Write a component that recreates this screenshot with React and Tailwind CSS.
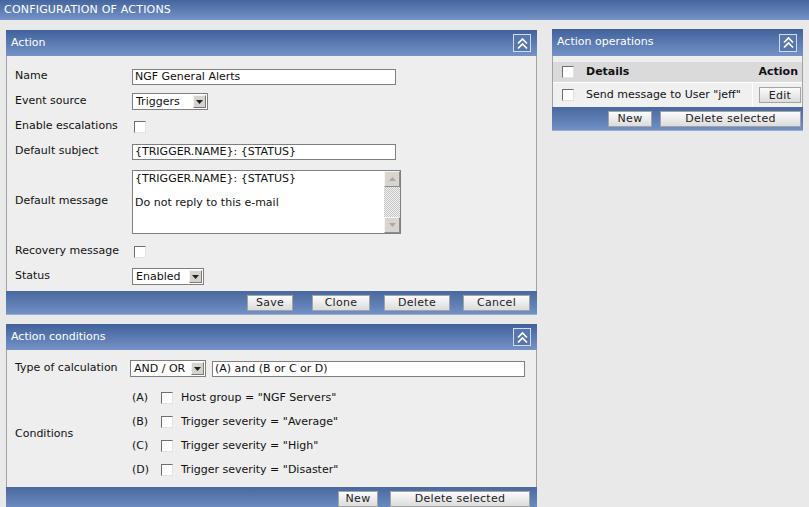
import React from "react";

const CollapseIcon = () => (
  <span className="w-[18px] h-[18px] border border-[#d0dbef] bg-[#5877b0] flex items-center justify-center">
    <svg width="13" height="13" viewBox="0 0 13 13" fill="none" stroke="white" strokeWidth="1.7">
      <path d="M2 6.5 L6.5 2 L11 6.5" />
      <path d="M2 11.5 L6.5 7 L11 11.5" />
    </svg>
  </span>
);

const PanelHeader = ({ title, h = "h-[26px]" }) => (
  <div className={`${h} flex items-center justify-between pl-[5px] pr-[6px] bg-gradient-to-b from-[#41619c] to-[#7593c6] text-white`}>
    <span>{title}</span>
    <CollapseIcon />
  </div>
);

const PanelFooter = ({ children, pr = "pr-[7px]" }) => (
  <div className={`h-[24px] flex items-center justify-end ${pr} bg-gradient-to-b from-[#48689f] to-[#7190c4] border-b border-[#9aaed0]`}>
    {children}
  </div>
);

const Button = ({ label, className = "" }) => (
  <button
    className={`h-[16px] border border-[#a3a3a3] bg-gradient-to-b from-[#fbfbfb] to-[#dcdcdc] text-[11px] leading-none text-[#222] tracking-[0.3px] ${className}`}
  >
    {label}
  </button>
);

const Checkbox = () => (
  <span className="inline-block w-[12px] h-[12px] bg-white border border-t-[#6e6e6e] border-l-[#6e6e6e] border-r-[#e2e2e2] border-b-[#e2e2e2]" />
);

const Select = ({ value, width }) => (
  <div
    className={`h-[17px] ${width} flex items-center justify-between bg-white border border-[#7f7f7f] pl-[3px] pr-[1px]`}
  >
    <span className="leading-none">{value}</span>
    <span className="w-[13px] h-[13px] bg-[#d6d3cc] border border-t-[#f4f4f4] border-l-[#f4f4f4] border-r-[#7a7a7a] border-b-[#7a7a7a] flex items-center justify-center">
      <svg width="7" height="4" viewBox="0 0 7 4">
        <path d="M0 0 H7 L3.5 4 Z" fill="#222" />
      </svg>
    </span>
  </div>
);

const TextInput = ({ value, width }) => (
  <div className={`h-[16px] ${width} flex items-center bg-white border border-[#7f7f7f] px-[2px]`}>
    <span className="leading-none">{value}</span>
  </div>
);

const Row = ({ label, children, h = "h-[25px]" }) => (
  <div className={`flex items-center ${h}`}>
    <div className="w-[117px] shrink-0">{label}</div>
    <div className="flex items-center">{children}</div>
  </div>
);

const ScrollArrow = ({ up }) => (
  <div className="w-[16px] h-[16px] bg-[#d8d5ce] border border-t-[#f6f6f6] border-l-[#f6f6f6] border-r-[#8c8c8c] border-b-[#8c8c8c] flex items-center justify-center">
    <svg width="7" height="4" viewBox="0 0 7 4">
      <path d={up ? "M0 4 H7 L3.5 0 Z" : "M0 0 H7 L3.5 4 Z"} fill="#a8a8a8" />
    </svg>
  </div>
);

const conditions = [
  ["(A)", 'Host group = "NGF Servers"'],
  ["(B)", 'Trigger severity = "Average"'],
  ["(C)", 'Trigger severity = "High"'],
  ["(D)", 'Trigger severity = "Disaster"'],
];

export default function App() {
  return (
    <div className="w-[809px] h-[507px] overflow-hidden bg-[#e9e9e9] font-['DejaVu_Sans',sans-serif] text-[11px] text-[#111]">
      {/* Top bar */}
      <div className="h-[20px] flex items-center pl-[4px] bg-gradient-to-b from-[#45659f] to-[#7593c7] text-white uppercase text-[11px] tracking-[0.2px]">
        Configuration of actions
      </div>

      <div className="flex mt-[10px] ml-[6px] gap-[15px]">
        {/* Left column */}
        <div className="w-[531px] flex flex-col">
          {/* Action panel */}
          <div>
            <PanelHeader title="Action" />
            <div className="bg-[#eeeeee] border-x border-[#a2a2a2] pt-[8px] pb-[2px] pl-[8px]">
              <Row label="Name">
                <TextInput value="NGF General Alerts" width="w-[264px]" />
              </Row>
              <Row label="Event source">
                <Select value="Triggers" width="w-[76px]" />
              </Row>
              <Row label="Enable escalations">
                <span className="ml-[2px] flex">
                  <Checkbox />
                </span>
              </Row>
              <Row label="Default subject">
                <TextInput value="{TRIGGER.NAME}: {STATUS}" width="w-[264px]" />
              </Row>
              <Row label="Default message" h="h-[75px]">
                <div className="w-[269px] h-[64px] flex bg-white border border-[#7f7f7f]">
                  <div className="flex-1 px-[2px] pt-[2px] leading-[12px]">
                    <div>{"{TRIGGER.NAME}: {STATUS}"}</div>
                    <div className="h-[12px]" />
                    <div>Do not reply to this e-mail</div>
                  </div>
                  <div className="w-[16px] flex flex-col bg-[repeating-conic-gradient(#c4c4c4_0_25%,#f2f2f2_0_50%)] bg-[length:2px_2px]">
                    <ScrollArrow up />
                    <div className="flex-1" />
                    <ScrollArrow />
                  </div>
                </div>
              </Row>
              <Row label="Recovery message">
                <span className="ml-[2px] flex">
                  <Checkbox />
                </span>
              </Row>
              <Row label="Status">
                <Select value="Enabled" width="w-[72px]" />
              </Row>
            </div>
            <PanelFooter>
              <Button label="Save" className="w-[46px]" />
              <Button label="Clone" className="w-[58px] ml-[19px]" />
              <Button label="Delete" className="w-[66px] ml-[14px]" />
              <Button label="Cancel" className="w-[67px] ml-[13px]" />
            </PanelFooter>
          </div>

          {/* Action conditions panel */}
          <div className="mt-[9px]">
            <PanelHeader title="Action conditions" />
            <div className="bg-[#eeeeee] border-x border-[#a2a2a2] pt-[6px] pb-[5px] pl-[8px]">
              <div className="flex items-center h-[25px]">
                <div className="w-[115px] shrink-0">Type of calculation</div>
                <Select value="AND / OR" width="w-[76px]" />
                <div className="ml-[6px]">
                  <TextInput value="(A) and (B or C or D)" width="w-[313px]" />
                </div>
              </div>
              <div className="flex items-center mt-[5px]">
                <div className="w-[117px] shrink-0">Conditions</div>
                <div className="flex flex-col">
                  {conditions.map(([tag, text]) => (
                    <div key={tag} className="h-[24px] flex items-center">
                      <span className="w-[29px]">{tag}</span>
                      <Checkbox />
                      <span className="ml-[8px]">{text}</span>
                    </div>
                  ))}
                </div>
              </div>
            </div>
            <PanelFooter>
              <Button label="New" className="w-[40px]" />
              <Button label="Delete selected" className="w-[140px] ml-[12px]" />
            </PanelFooter>
          </div>
        </div>

        {/* Right column */}
        <div className="w-[251px] -mt-[1px]">
          <PanelHeader title="Action operations" h="h-[27px]" />
          <div className="bg-[#eeeeee] border-x border-[#a2a2a2] pt-[6px]">
            <div className="flex items-center h-[20px] bg-[#dadada] font-bold">
              <div className="w-[27px] flex justify-center pl-[2px]">
                <Checkbox />
              </div>
              <div className="flex-1 pl-[6px]">Details</div>
              <div className="pr-[4px]">Action</div>
            </div>
            <div className="flex items-center h-[25px] bg-[#f0f0f0] border-t border-white">
              <div className="w-[27px] h-full flex items-center justify-center pl-[2px]">
                <Checkbox />
              </div>
              <div className="flex-1 h-full flex items-center pl-[6px]">Send message to User "jeff"</div>
              <div className="w-[50px] h-full flex items-center justify-end pr-[1px] border-l border-white">
                <Button label="Edit" className="w-[42px]" />
              </div>
            </div>
          </div>
          <PanelFooter pr="pr-[2px]">
            <Button label="New" className="w-[44px]" />
            <Button label="Delete selected" className="w-[141px] ml-[8px]" />
          </PanelFooter>
        </div>
      </div>
    </div>
  );
}
